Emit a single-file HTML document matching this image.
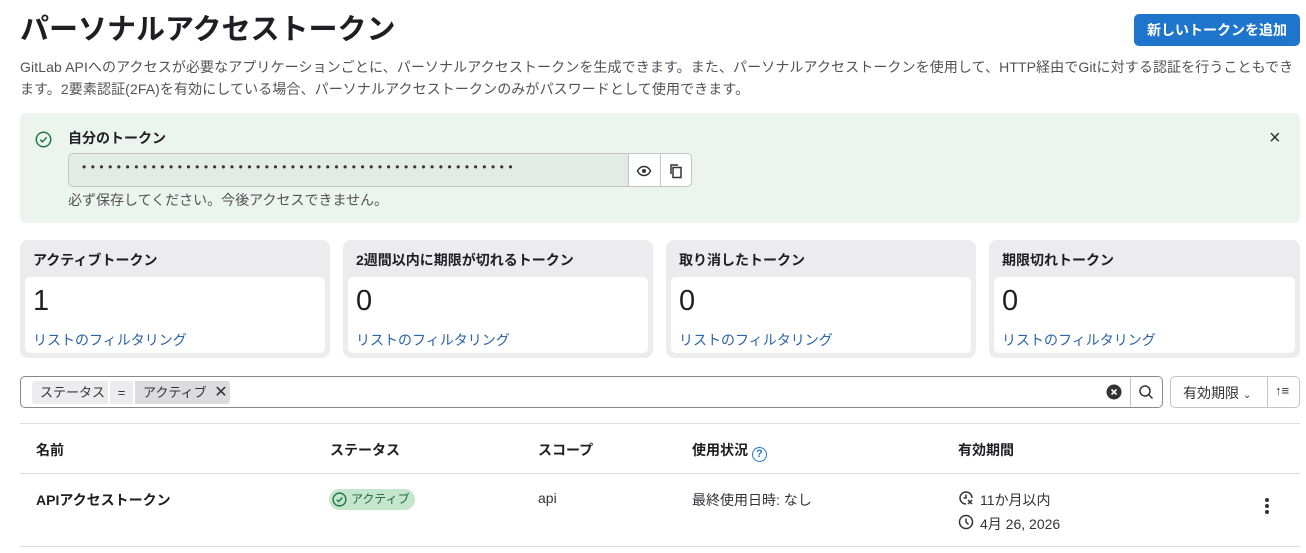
<!DOCTYPE html>
<html><head><meta charset="utf-8"><style>
*{box-sizing:border-box;margin:0;padding:0}
body{width:1306px;height:553px;overflow:hidden;background:#fff;font-family:"Liberation Sans","Noto Sans CJK JP",sans-serif;color:#333238;font-size:14px;position:relative}
.abs{position:absolute}
h1{position:absolute;left:20px;top:6px;font-size:29px;font-weight:700;color:#1f1e24}
.btn{position:absolute;left:1134px;top:14px;width:166px;height:32px;background:#1f75cb;color:#fff;border-radius:5px;font-size:14px;font-weight:700;text-align:center;line-height:32px}
.desc{position:absolute;left:20px;top:56px;width:1280px;font-size:14px;line-height:22px;color:#535158;letter-spacing:0.1px}
.alert{position:absolute;left:20px;top:113px;width:1280px;height:110px;background:#ecf4ee;border-radius:5px}
.card{position:absolute;top:240px;width:310px;height:118px;background:#ececef;border-radius:8px}
.card .t{position:absolute;left:13px;top:10px;font-weight:700;font-size:14px;color:#1f1e24}
.card .in{position:absolute;left:5px;top:37px;right:5px;bottom:5px;background:#fff;border-radius:5px}
.card .n{position:absolute;left:8px;top:8px;font-size:29px;color:#1f1e24}
.card .l{position:absolute;left:8px;top:53px;color:#2a63a8;font-size:14px}
.th{position:absolute;top:440px;font-weight:700;font-size:14px;color:#1f1e24}
.td{position:absolute;top:490px;font-size:14px}
</style></head><body>
<h1>パーソナルアクセストークン</h1>
<div class="btn">新しいトークンを追加</div>
<div class="desc">GitLab APIへのアクセスが必要なアプリケーションごとに、パーソナルアクセストークンを生成できます。また、パーソナルアクセストークンを使用して、HTTP経由でGitに対する認証を行うこともできます。2要素認証(2FA)を有効にしている場合、パーソナルアクセストークンのみがパスワードとして使用できます。</div>
<div class="alert">
<svg class="abs" style="left:15px;top:18px" width="17" height="17" viewBox="0 0 16 16"><circle cx="8" cy="8" r="6.8" fill="none" stroke="#217645" stroke-width="1.4"/><path d="M5 8.2l2 2 4-4.2" fill="none" stroke="#217645" stroke-width="1.4"/></svg>
<div class="abs" style="left:48px;top:15px;font-weight:700;color:#1f1e24">自分のトークン</div>
<div class="abs" style="left:48px;top:40px;width:624px;height:34px;border:1px solid #c4c3c8;border-radius:5px;background:#e2ebe5;overflow:hidden">
<div class="abs" style="left:13px;top:6px;letter-spacing:4.5px;font-size:12px;color:#333">••••••••••••••••••••••••••••••••••••••••••••••••••</div>
<div class="abs" style="left:559px;top:0;width:64px;height:34px;background:#fff;border-left:1px solid #c4c3c8"></div>
<div class="abs" style="left:591px;top:0;width:1px;height:34px;background:#c4c3c8"></div>
<svg class="abs" style="left:567px;top:9px" width="16" height="16" viewBox="0 0 16 16"><path d="M1.5 8C3 5 5.3 3.5 8 3.5S13 5 14.5 8C13 11 10.7 12.5 8 12.5S3 11 1.5 8z" fill="none" stroke="#333" stroke-width="1.4"/><circle cx="8" cy="8" r="2" fill="#333"/></svg>
<svg class="abs" style="left:599px;top:9px" width="16" height="16" viewBox="0 0 16 16"><rect x="5" y="4.5" width="8" height="10" fill="none" stroke="#333" stroke-width="1.5"/><path d="M3 11V2h7" fill="none" stroke="#333" stroke-width="1.5"/></svg>
</div>
<div class="abs" style="left:48px;top:77px;color:#535158">必ず保存してください。今後アクセスできません。</div>
<div class="abs" style="left:1249px;top:14px;font-size:20px;color:#333">×</div>
</div>
<div class="card" style="left:20px"><div class="t">アクティブトークン</div><div class="in"><div class="n">1</div><div class="l">リストのフィルタリング</div></div></div>
<div class="card" style="left:343px"><div class="t">2週間以内に期限が切れるトークン</div><div class="in"><div class="n">0</div><div class="l">リストのフィルタリング</div></div></div>
<div class="card" style="left:666px"><div class="t">取り消したトークン</div><div class="in"><div class="n">0</div><div class="l">リストのフィルタリング</div></div></div>
<div class="card" style="left:989px;width:311px"><div class="t">期限切れトークン</div><div class="in"><div class="n">0</div><div class="l">リストのフィルタリング</div></div></div>
<div class="abs" style="left:20px;top:376px;width:1143px;height:32px;border:1px solid #89888d;border-radius:5px"></div>
<div class="abs" style="left:32px;top:381px;width:76px;height:23px;background:#ececef;border-radius:3px 0 0 3px;font-size:13px;line-height:23px;padding-left:8px">ステータス</div>
<div class="abs" style="left:110px;top:381px;width:23px;height:23px;background:#ececef;font-size:13px;line-height:23px;text-align:center">=</div>
<div class="abs" style="left:135px;top:381px;width:95px;height:23px;background:#dcdcde;border-radius:0 3px 3px 0;font-size:13px;line-height:23px;padding-left:8px">アクティブ <span style="font-size:16px;margin-left:4px">✕</span></div>
<svg class="abs" style="left:1106px;top:384px" width="16" height="16" viewBox="0 0 16 16"><circle cx="8" cy="8" r="7.5" fill="#333"/><path d="M5.5 5.5l5 5M10.5 5.5l-5 5" stroke="#fff" stroke-width="1.6"/></svg>
<div class="abs" style="left:1130px;top:377px;width:1px;height:30px;background:#c4c3c8"></div>
<svg class="abs" style="left:1138px;top:384px" width="16" height="16" viewBox="0 0 16 16"><circle cx="7" cy="7" r="5" fill="none" stroke="#333" stroke-width="1.5"/><path d="M10.5 10.5l4 4" stroke="#333" stroke-width="1.5"/></svg>
<div class="abs" style="left:1170px;top:376px;width:130px;height:32px;border:1px solid #c4c3c8;border-radius:5px"></div>
<div class="abs" style="left:1183px;top:383px;font-size:14px">有効期限 <span style="font-size:10px">⌄</span></div>
<div class="abs" style="left:1267px;top:377px;width:1px;height:30px;background:#c4c3c8"></div>
<div class="abs" style="left:1275px;top:383px;font-size:13px;font-weight:700">↑≡</div>
<div class="abs" style="left:20px;top:423px;width:1280px;height:1px;background:#dcdcde"></div>
<div class="th" style="left:36px">名前</div>
<div class="th" style="left:330px">ステータス</div>
<div class="th" style="left:538px">スコープ</div>
<div class="th" style="left:692px">使用状況 <span style="display:inline-block;width:15px;height:15px;border:1.5px solid #1f75cb;border-radius:50%;color:#1f75cb;font-size:11px;line-height:12px;text-align:center;vertical-align:-2px">?</span></div>
<div class="th" style="left:958px">有効期間</div>
<div class="abs" style="left:20px;top:473px;width:1280px;height:1px;background:#dcdcde"></div>
<div class="td" style="left:36px;font-weight:700;color:#1f1e24">APIアクセストークン</div>
<div class="abs" style="left:329px;top:489px;width:86px;height:21px;background:#c3e6cd;border-radius:11px;font-size:12px;line-height:21px;padding-left:22px;color:#24663b">アクティブ</div>
<svg class="abs" style="left:332px;top:492px" width="15" height="15" viewBox="0 0 16 16"><circle cx="8" cy="8" r="6.8" fill="none" stroke="#217645" stroke-width="1.5"/><path d="M5 8.2l2 2 4-4.2" fill="none" stroke="#217645" stroke-width="1.5"/></svg>
<div class="td" style="left:538px">api</div>
<div class="td" style="left:692px">最終使用日時: なし</div>
<svg class="abs" style="left:958px;top:490px" width="16" height="16" viewBox="0 0 16 16"><path d="M14 8A6 6 0 1 0 8 14" fill="none" stroke="#333" stroke-width="1.5"/><path d="M8 4.5V8h-2.5M10 10l4 4M14 10l-4 4" fill="none" stroke="#333" stroke-width="1.5"/></svg>
<div class="td" style="left:980px">11か月以内</div>
<svg class="abs" style="left:958px;top:514px" width="16" height="16" viewBox="0 0 16 16"><circle cx="8" cy="8" r="6.5" fill="none" stroke="#333" stroke-width="1.5"/><path d="M8 4.5V8l2.5 2.5" fill="none" stroke="#333" stroke-width="1.5"/></svg>
<div class="td" style="left:980px;top:514px">4月 26, 2026</div>
<div class="abs" style="left:1265px;top:498px;width:4px;height:4px;background:#333;border-radius:50%;box-shadow:0 6px 0 #333,0 12px 0 #333"></div>
<div class="abs" style="left:20px;top:546px;width:1280px;height:1px;background:#dcdcde"></div>
</body></html>
